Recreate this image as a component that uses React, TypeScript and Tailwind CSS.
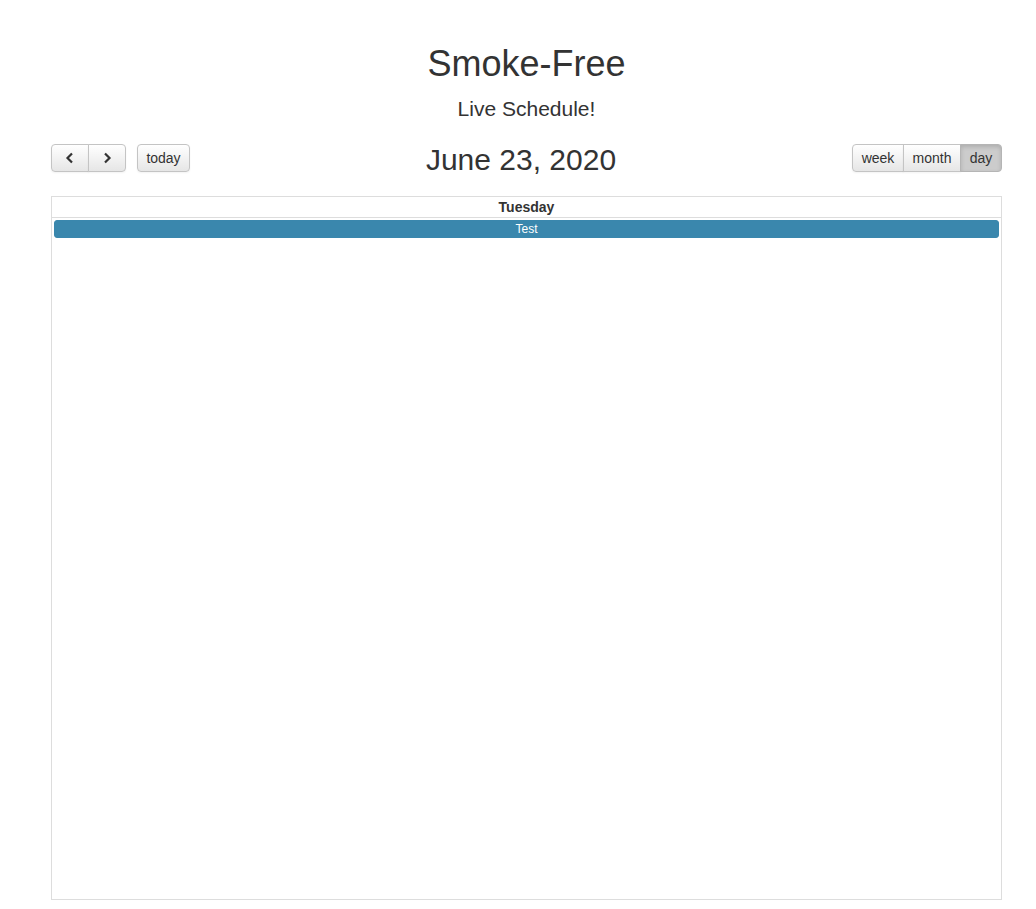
const btn =
  "h-[28px] px-[9px] text-[14px] text-[#333] border border-[#c4c4c4] bg-gradient-to-b from-white to-[#e6e6e6] shadow-[inset_0_1px_0_rgba(255,255,255,0.2),0_1px_2px_rgba(0,0,0,0.05)] flex items-center justify-center";

export default function App() {
  return (
    <div
      className="min-h-[909px] bg-white text-[#333]"
      style={{ fontFamily: '"Liberation Sans", Arial, sans-serif' }}
    >
      <div className="ml-[51px] w-[951px] pt-[41px]">
        <h1 className="text-center text-[36px] leading-[46px]">Smoke-Free</h1>
        <h2 className="mt-[10px] text-center text-[21px] leading-[24px]">Live Schedule!</h2>

        {/* toolbar */}
        <div className="mt-[17px] flex items-center justify-between">
          <div className="flex items-center gap-[10px]">
            <div className="flex">
              <button className={btn + " w-[38px] rounded-l-[4px]"}>
                <svg width="12" height="12" viewBox="0 0 12 12" fill="none" stroke="#333" strokeWidth="2.2">
                  <path d="M8 1.5 3.5 6 8 10.5" />
                </svg>
              </button>
              <button className={btn + " w-[38px] rounded-r-[4px] -ml-px"}>
                <svg width="12" height="12" viewBox="0 0 12 12" fill="none" stroke="#333" strokeWidth="2.2">
                  <path d="M4 1.5 8.5 6 4 10.5" />
                </svg>
              </button>
            </div>
            <button className={btn + " ml-px rounded-[4px] w-[53px]"}>today</button>
          </div>
          <div className="mt-[4px] text-[30px] leading-[36px]">June 23, 2020</div>
          <div className="flex">
            <button className={btn + " rounded-l-[4px] w-[52px]"}>week</button>
            <button className={btn + " -ml-px w-[58px]"}>month</button>
            <button className="-ml-px h-[28px] w-[42px] rounded-r-[4px] border border-[#b5b5b5] bg-[#cccccc] text-[14px] text-[#333] shadow-[inset_0_2px_4px_rgba(0,0,0,0.15)] flex items-center justify-center">
              day
            </button>
          </div>
        </div>

        {/* calendar */}
        <div className="mt-[18px] h-[704px] border border-[#ddd]">
          <div className="h-[21px] border-b border-[#ddd] text-center text-[14px] font-bold leading-[20px]">
            Tuesday
          </div>
          <div className="px-[2px] pt-[2px]">
            <div className="h-[18px] rounded-[3px] border border-[#3a87ad] bg-[#3a87ad] text-center text-[12px] leading-[16px] text-white">
              Test
            </div>
          </div>
        </div>
      </div>
    </div>
  );
}
